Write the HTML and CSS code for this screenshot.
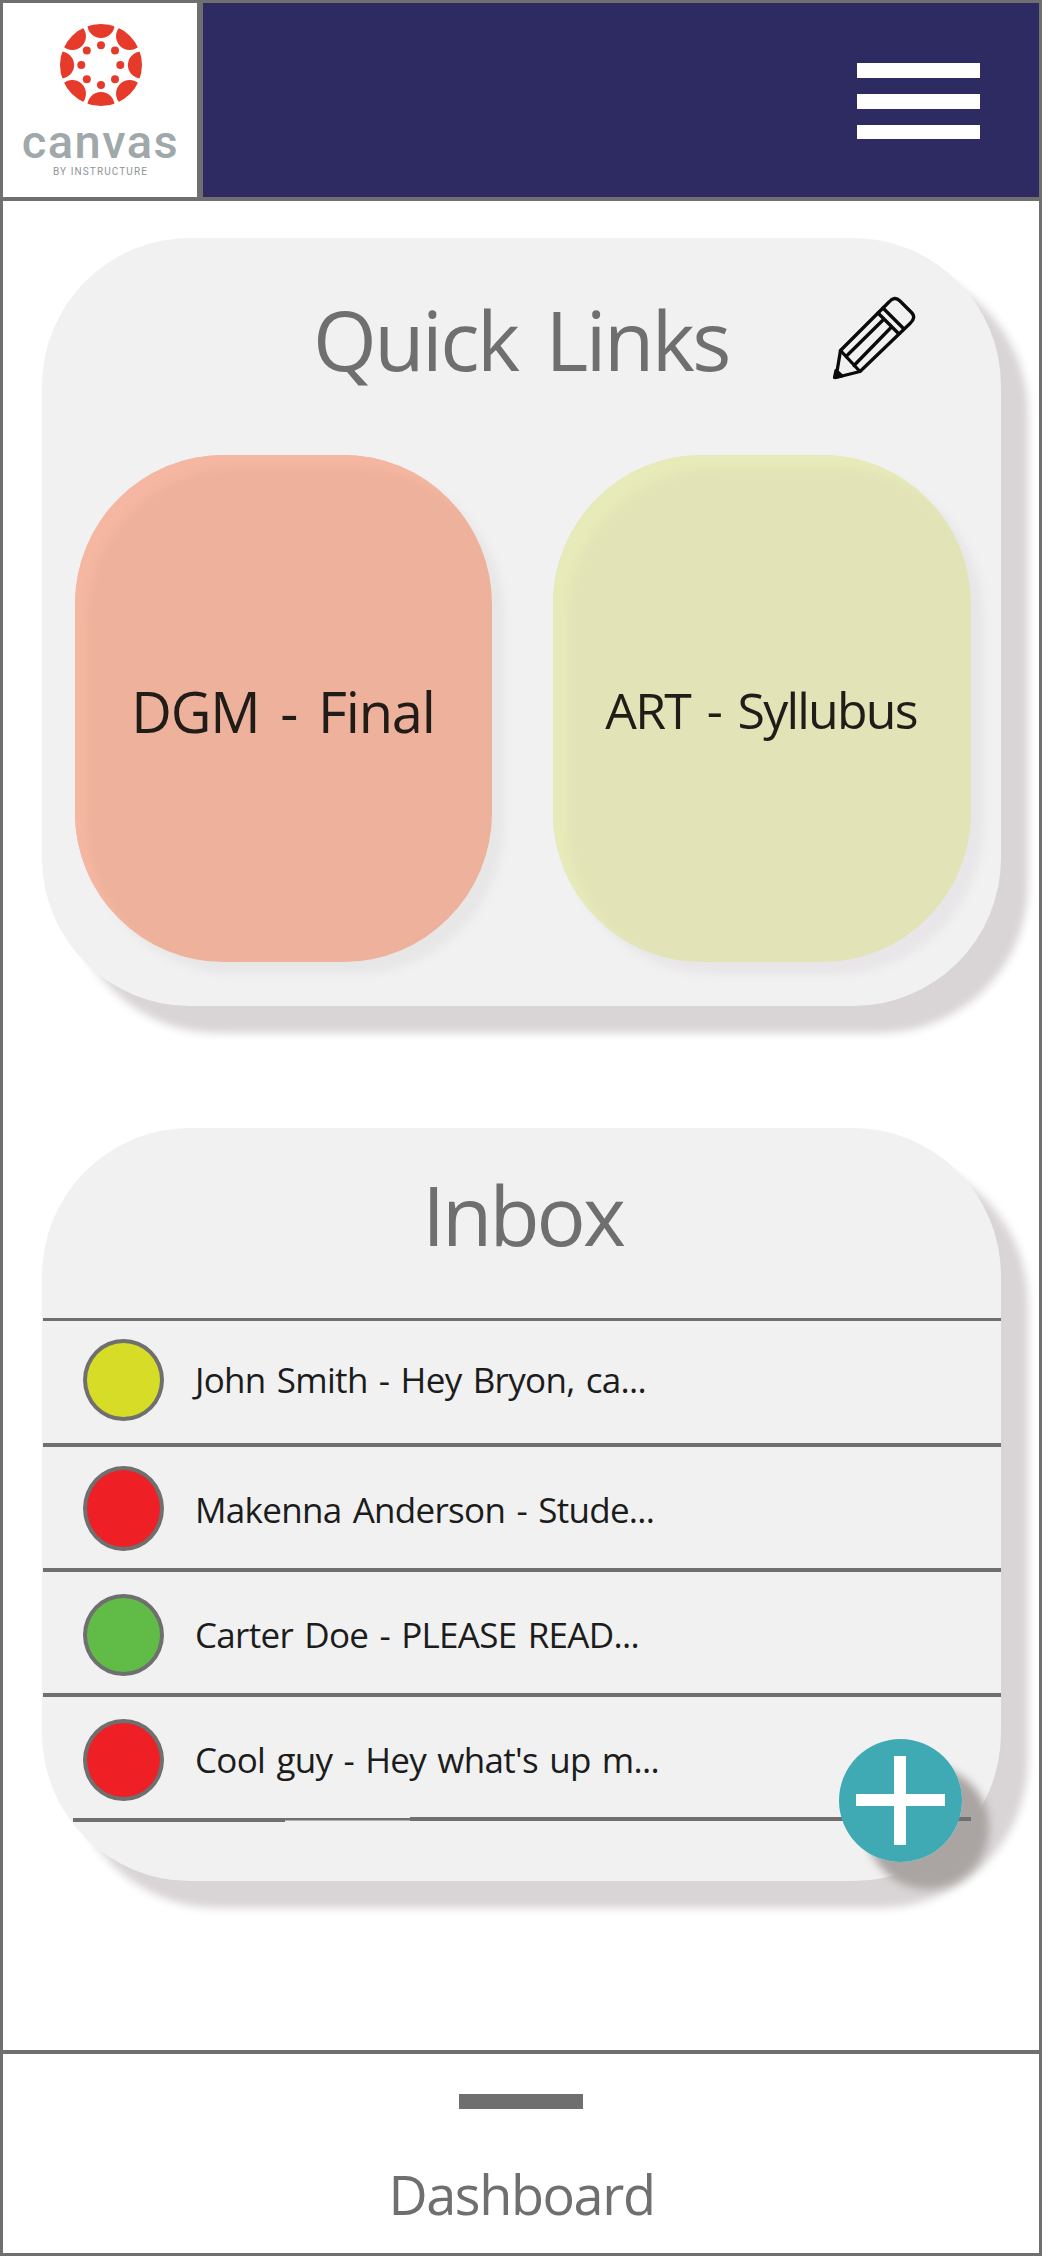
FILE: index.html
```html
<!DOCTYPE html>
<html lang="en">
<head>
<meta charset="utf-8">
<title>Canvas Dashboard</title>
<link rel="stylesheet" href="styles.css">
</head>
<body>
<div class="screen">
  <header class="topbar">
    <div class="logo">
      <svg class="logo-mark" viewBox="0 0 82 82" width="82" height="82">
        <defs>
          <clipPath id="disc"><circle cx="41" cy="41" r="41"/></clipPath>
          <g id="segment"><circle cx="41" cy="0.5" r="13.6"/></g>
        </defs>
        <g fill="#e63b2b">
          <g clip-path="url(#disc)">
            <use href="#segment"/>
            <use href="#segment" transform="rotate(45 41 41)"/>
            <use href="#segment" transform="rotate(90 41 41)"/>
            <use href="#segment" transform="rotate(135 41 41)"/>
            <use href="#segment" transform="rotate(180 41 41)"/>
            <use href="#segment" transform="rotate(225 41 41)"/>
            <use href="#segment" transform="rotate(270 41 41)"/>
            <use href="#segment" transform="rotate(315 41 41)"/>
          </g>
          <circle cx="41" cy="21.3" r="4"/><circle cx="55" cy="26.5" r="4"/>
          <circle cx="60.3" cy="41" r="4"/><circle cx="55" cy="55.3" r="4"/>
          <circle cx="41" cy="61" r="4"/><circle cx="26.8" cy="55.3" r="4"/>
          <circle cx="21.3" cy="41" r="4"/><circle cx="26.8" cy="26.5" r="4"/>
        </g>
      </svg>
      <div class="logo-name">canvas</div>
      <div class="logo-by">BY INSTRUCTURE</div>
    </div>
    <div class="menu"><i></i><i></i><i></i></div>
  </header>

  <main class="content">
    <section class="card links">
      <div class="links-head">
        <h1 class="title title-links">Quick Links</h1>
        <svg class="pencil" viewBox="0 0 84 84" width="84" height="84" fill="none" stroke="#0a0a0a" stroke-width="3.3" stroke-linejoin="round" stroke-linecap="round">
          <path d="M8.500 54.500 L57 6 Q62.500 -0.500 68 5 L79.500 16.500 Q84.500 21.500 78 27.500 L28 75.500 L4 81.500 Z"/>
          <path d="M46 17 L66 37 M51 12 L71 32 M14 60.500 L50.500 24.500 M22 69.500 L59.500 31 M8.500 54.500 L27.500 75"/>
          <path d="M4 74.500 L2.500 81.500 L10 80 Z" fill="#0a0a0a"/>
        </svg>
      </div>
      <div class="tiles">
        <div class="tile tile-coral"><span class="tile-a">DGM - Final</span></div>
        <div class="tile tile-lime"><span class="tile-b">ART - Syllubus</span></div>
      </div>
    </section>

    <section class="card inbox">
      <h2 class="title title-inbox">Inbox</h2>
      <div class="row r1"><span class="dot yellow"></span><span class="msg">John Smith - Hey Bryon, ca...</span></div>
      <div class="row r2"><span class="dot red tall"></span><span class="msg">Makenna Anderson - Stude...</span></div>
      <div class="row r3"><span class="dot green"></span><span class="msg">Carter Doe - PLEASE READ...</span></div>
      <div class="row r4"><span class="dot red"></span><span class="msg">Cool guy - Hey what's up m...</span></div>
      <svg class="last-rule" viewBox="0 0 898 5" width="898" height="5"><path d="M0 1H212V1H337V0H898V4H337V3.500H212V5H0Z" fill="#6f6f6f"/></svg>
      <div class="fab"><svg viewBox="0 0 123 123" width="123" height="123"><path d="M17 61H106M61 17V106" stroke="#fff" stroke-width="12"/></svg></div>
    </section>
  </main>

  <footer class="bottom">
    <div class="handle"></div>
    <div class="bottom-label">Dashboard</div>
  </footer>
</div>
</body>
</html>
```
FILE: styles.css
```css
* { box-sizing: border-box; }
body { margin: 0; background: #fff; font-family: "Open Sans", "Noto Sans", sans-serif; }
.screen { width: 1042px; height: 2256px; border: 3px solid #6f6f6f; display: flex; flex-direction: column; background: #fff; }

.topbar { height: 198px; flex: none; display: flex; justify-content: space-between; background: #2e2a62; border-bottom: 4px solid #6f6f6f; }
.logo { width: 200px; height: 194px; background: #fff; border-right: 6px solid #6f6f6f; display: flex; flex-direction: column; align-items: center; padding-top: 21px; }
.logo-mark { display: block; margin-left: 2px; }
.logo-name { font: 500 47px/48px Roboto, sans-serif; color: #9fa8aa; letter-spacing: 1.5px; margin-top: 12px; padding-left: 1px; white-space: nowrap; }
.logo-by { font: 10px/12px Roboto, sans-serif; color: #8f9496; letter-spacing: 1.1px; margin-top: 0; padding-left: 1px; white-space: nowrap; }
.menu { width: 123px; margin: 60px 59px 0 0; display: flex; flex-direction: column; gap: 16px; }
.menu i { height: 15px; background: #fff; }
.menu i:last-child { height: 14px; }

.content { flex: 1; padding: 37px 38px 0 39px; display: flex; flex-direction: column; gap: 122px; }
.card { background: #f1f1f1; border-radius: 148px; box-shadow: 27px 27px 9px #d9d4d5; }
.title { margin: 0; font-size: 82px; line-height: 110px; font-weight: 400; color: #6f6f6f; white-space: nowrap; }

.links { height: 768px; padding: 46px 30px 0 33px; }
.links-head { display: grid; grid-template-columns: 1fr auto 1fr; }
.title-links { grid-column: 2; letter-spacing: -2.5px; word-spacing: 9px; margin-right: 4px; }
.pencil { justify-self: end; margin: 12px 55px 0 0; }
.tiles { display: grid; grid-template-columns: 417px 418px; justify-content: space-between; margin-top: 61px; }
.tile { height: 507px; border-radius: 149px; display: flex; justify-content: center; color: #201c18; white-space: nowrap; }
.tile-coral { background: #eeb19b; box-shadow: inset 13px 13px 9px #f5b7a1, 12px 12px 9px #e8e7e7; }
.tile-lime { background: #e2e4b7; box-shadow: inset 15px 13px 9px #e7eab9, 12px 12px 9px #e8e6e8; }
.tile-a { font-size: 56px; line-height: 76px; margin-top: 218px; letter-spacing: -1.2px; word-spacing: 7.5px; padding-right: 1px; }
.tile-b { font-size: 50px; line-height: 70px; margin-top: 220px; letter-spacing: -1.8px; word-spacing: 5.5px; padding-right: 2px; }

.inbox { height: 753px; padding-top: 31px; position: relative; isolation: isolate; }
.title-inbox { text-align: center; margin: 0 0 49px 2px; letter-spacing: -3px; }
.row { height: 125px; border-top: 4px solid #6f6f6f; margin-left: 1px; padding-left: 40px; display: flex; align-items: center; gap: 31px; }
.r1 { border-top-width: 3px; padding-bottom: 5px; }
.r2 { padding-top: 2px; }
.r2 .msg { padding-top: 2px; }
.r3, .r4 { padding-top: 5px; }
.dot { width: 81px; height: 82px; flex: none; border: 4px solid #6f6f6f; border-radius: 50%; }
.tall { height: 85px; }
.yellow { background: #d7dd27; }
.red { background: #ee1f25; }
.green { background: #61bb47; }
.msg { font-size: 35px; line-height: 48px; color: #1c1c1c; white-space: nowrap; letter-spacing: -0.7px; word-spacing: 2.8px; }
.last-rule { display: block; margin: -1px 0 0 31px; }
.fab { position: absolute; left: 797px; top: 611px; width: 123px; height: 123px; border-radius: 50%; background: #40aab4; }
/* the button's shadow falls beneath the closing rule */
.fab::before { content: ""; position: absolute; inset: 0; border-radius: 50%; z-index: -1; box-shadow: 27px 27px 9px #aaa5a3; }
.fab svg { display: block; }

.bottom { height: 203px; flex: none; border-top: 4px solid #6f6f6f; display: flex; flex-direction: column; align-items: center; padding-top: 40px; }
.handle { width: 124px; height: 15px; background: #6f6f6f; }
.bottom-label { font-size: 54px; line-height: 72px; color: #6f6f6f; margin-top: 49px; letter-spacing: -1.4px; padding-left: 1px; }
```
